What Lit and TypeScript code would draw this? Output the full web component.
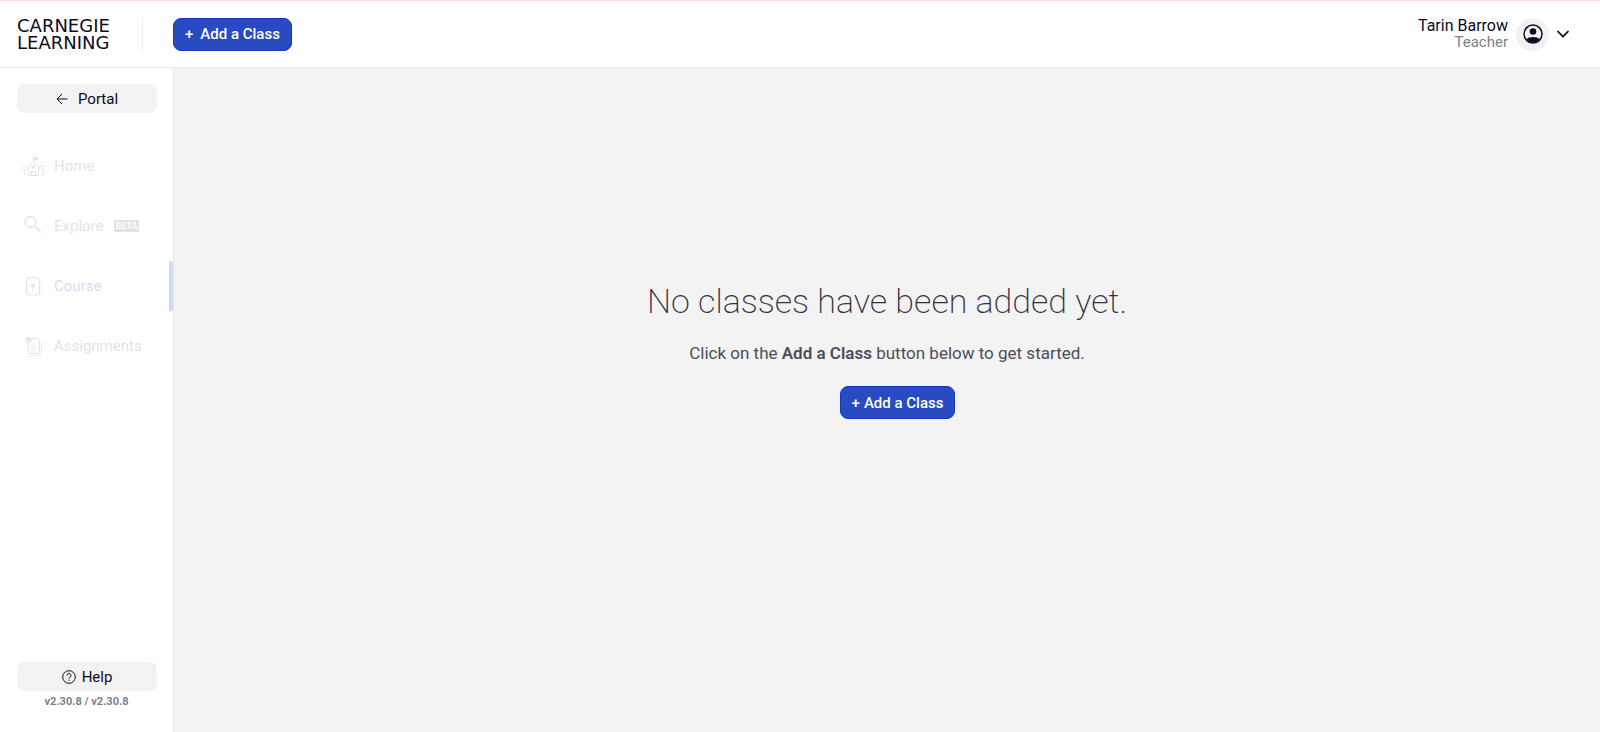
import { LitElement, html, css, svg } from "lit";
import { customElement, state } from "lit/decorators.js";
import { classMap } from "lit/directives/class-map.js";

const homeIcon = svg`
  <path d="M7 20.500V11.500L11.500 7.500l5 4v9zM9.500 20.500v-4h4v4" />
  <path d="M11.500 7V2.500" />
  <rect class="solid" x="11" y="2" width="5" height="3" />
  <circle class="solid" cx="11.500" cy="12" r="1.800" />
  <path opacity="0.7" d="M6.500 11.500H1.500v2.500h5M2.500 14v5.500h4M17 11.500h5v2.500h-5M21.500 14v5.500h-4" />`;

const exploreIcon = svg`
  <circle cx="8.500" cy="7" r="5.500" stroke-width="1.300" />
  <path stroke-width="1.300" d="M12.500 11l6.500 6.500" />`;

const courseIcon = svg`
  <rect x="4.500" y="3" width="13" height="17" rx="2.500" stroke-width="1.200" />
  <path opacity="0.7" d="M3 7.500h1M3 11.500h1M3 15.500h1M18 7.500h1.500M18 11.500h1.500M18 15.500h1.500" />
  <circle class="solid" cx="11" cy="10.500" r="2" />
  <path d="M11 11v3M10 15.500h2" />`;

const assignmentsIcon = svg`
  <path d="M9 3.500h6.500a2 2 0 0 1 2 2v11a2 2 0 0 1-2 2H8a2 2 0 0 1-2-2V8" />
  <path opacity="0.7" d="M19.500 6.500v12a2 2 0 0 1-2 2H8.500" />
  <path d="M8 11.500h7.500M8 13.500h7.500M8 16h4" opacity="0.7" />
  <circle class="solid" cx="6.500" cy="5" r="3" />
  <path class="tick" d="M5 5l1 1 2-2" />`;

const navItems = [
  { label: "Home", icon: homeIcon },
  { label: "Explore", icon: exploreIcon, badge: "BETA" },
  { label: "Course", icon: courseIcon },
  { label: "Assignments", icon: assignmentsIcon },
];

@customElement("app-root")
export class AppRoot extends LitElement {
  @state() private active = "Course";

  static styles = css`
    :host {
      display: flex;
      flex-direction: column;
      min-height: 100vh;
      box-sizing: border-box;
      border-top: 1px solid #fddde3;
      background: #fff;
      color: #0b0b1e;
      font: 15px/20px Roboto, sans-serif;
    }
    * {
      box-sizing: border-box;
    }
    button {
      display: flex;
      align-items: center;
      justify-content: center;
      margin: 0;
      padding: 0;
      border: 0;
      color: inherit;
      background: none;
      font: inherit;
      cursor: pointer;
    }
    svg {
      display: block;
      flex: none;
      fill: none;
      stroke: currentColor;
    }
    .solid {
      fill: currentColor;
      stroke: none;
    }
    header {
      display: flex;
      align-items: center;
      height: 67px;
      padding: 0 31px 0 17px;
      border-bottom: 1px solid #ececed;
    }
    .logo {
      display: block;
      width: 126px;
      border-right: 1px solid #eee;
      color: #0b0b1e;
      font: 18px/17px "DejaVu Sans", sans-serif;
      text-decoration: none;
    }
    .primary {
      height: 33px;
      padding: 0 11px;
      gap: 7px;
      border: 1px solid #0e38c2;
      border-radius: 8px;
      background: #284bc2;
      color: #fff;
      font-weight: 500;
    }
    .top {
      margin-left: 30px;
    }
    .user {
      gap: 8px;
      margin-left: auto;
      text-align: right;
    }
    .name {
      display: block;
      font-size: 16px;
      line-height: 17px;
    }
    .role {
      display: block;
      color: #7e7f8a;
      line-height: 17px;
    }
    .avatar {
      display: grid;
      place-items: center;
      width: 33px;
      height: 33px;
      border-radius: 50%;
      background: #f2f2f2;
    }
    .body {
      display: flex;
      flex: 1;
    }
    aside {
      display: flex;
      flex-direction: column;
      flex: none;
      width: 174px;
      padding-top: 16px;
      border-right: 1px solid #ececec;
    }
    .pill {
      height: 29px;
      margin: 0 16px 0 17px;
      gap: 10px;
      border-radius: 8px;
      background: #f2f2f2;
    }
    nav {
      display: flex;
      flex-direction: column;
      gap: 10px;
      margin-top: 28px;
    }
    .item {
      display: flex;
      align-items: center;
      height: 50px;
      padding-left: 22px;
      border-right: 4px solid transparent;
      color: #e3e3e5;
      text-decoration: none;
    }
    .item svg {
      margin-right: 9px;
    }
    .active {
      border-color: #d2d9f3;
      color: #d6dcf5;
    }
    .active svg {
      color: #e3e3e5;
    }
    .badge {
      margin-left: 10px;
      padding: 0 2px;
      border-radius: 2px;
      background: #e3e3e5;
      color: #fff;
      font-size: 9px;
      font-weight: 600;
      line-height: 12px;
    }
    .tick {
      stroke: #fff;
    }
    .foot {
      display: flex;
      flex-direction: column;
      margin-top: auto;
      padding-bottom: 23px;
    }
    .help {
      gap: 6px;
    }
    .version {
      padding-top: 3px;
      color: #7e7f8a;
      font-size: 11px;
      font-weight: 700;
      line-height: 15px;
      text-align: center;
    }
    main {
      display: flex;
      flex: 1;
      flex-direction: column;
      align-items: center;
      padding-top: 211px;
      background: #f3f3f3;
      color: #4b4d5a;
    }
    h1 {
      margin: 0;
      color: #2f3140;
      font-size: 34px;
      font-weight: 200;
      line-height: 44px;
    }
    p {
      margin: 19px 0 22px;
      font-size: 17px;
      line-height: 22px;
    }
    p b {
      font-weight: 600;
    }
    .center {
      margin-left: 21px;
      gap: 4px;
    }
  `;

  render() {
    return html`
      <header>
        <a class="logo" href="#">CARNEGIE<br />LEARNING</a>
        <button class="primary top"><span>+</span><span>Add a Class</span></button>
        <button class="user">
          <span><span class="name">Tarin Barrow</span><span class="role">Teacher</span></span>
          <span class="avatar">
            <svg width="20" height="20" viewBox="0 0 20 20">
              <circle cx="10" cy="10" r="9" stroke-width="1.500" />
              <circle class="solid" cx="10" cy="7.500" r="3.300" />
              <path class="solid" d="M3.500 15.500c2-3.200 11-3.200 13 0A9 9 0 0 1 3.500 15.500z" />
            </svg>
          </span>
          <svg width="12" height="8" viewBox="0 0 12 8" stroke-width="1.700">
            <path d="M0.500 1l5.500 5.500L11.500 1" />
          </svg>
        </button>
      </header>
      <div class="body">
        <aside>
          <button class="pill">
            <svg width="12" height="12" viewBox="0 0 12 12">
              <path d="M11.500 6H1M6 1L1 6l5 5" />
            </svg>
            <span>Portal</span>
          </button>
          <nav>
            ${navItems.map(
              (item) => html`
                <a
                  href="#"
                  class=${classMap({ item: true, active: item.label === this.active })}
                  @click=${() => (this.active = item.label)}
                >
                  <svg width="23" height="23" viewBox="0 0 23 23">${item.icon}</svg>
                  <span>${item.label}</span>
                  ${item.badge ? html`<span class="badge">${item.badge}</span>` : ""}
                </a>
              `
            )}
          </nav>
          <div class="foot">
            <button class="pill help">
              <svg width="14" height="14" viewBox="0 0 14 14">
                <circle cx="7" cy="7" r="6.300" />
                <path d="M5 5.500a2 2 0 1 1 3 1.700c-.7.400-1 .7-1 1.400M7 9.700v1.200" />
              </svg>
              <span>Help</span>
            </button>
            <span class="version">v2.30.8 / v2.30.8</span>
          </div>
        </aside>
        <main>
          <h1>No classes have been added yet.</h1>
          <p>Click on the <b>Add a Class</b> button below to get started.</p>
          <button class="primary center"><span>+</span><span>Add a Class</span></button>
        </main>
      </div>
    `;
  }
}
